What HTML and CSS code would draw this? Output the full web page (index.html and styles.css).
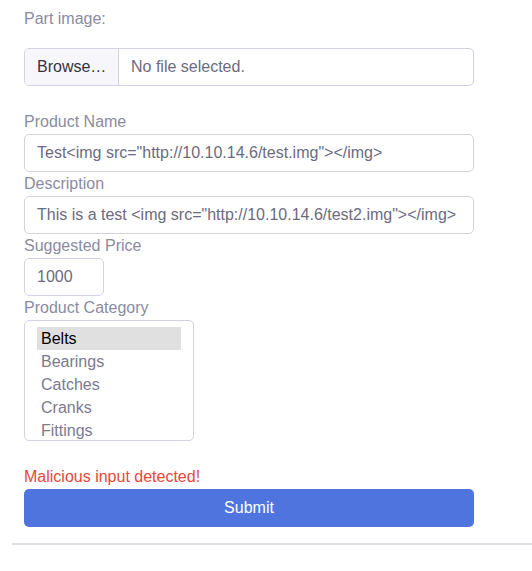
FILE: index.html
```html
<!DOCTYPE html>
<html>
<head>
<meta charset="utf-8">
<link rel="stylesheet" href="styles.css">
</head>
<body>
<div class="page">
  <form class="form">
    <label class="label label-first">Part image:</label>
    <div class="file">
      <span class="file-btn">Browse…</span>
      <span class="file-name">No file selected.</span>
    </div>
    <label class="label label-gap">Product Name</label>
    <div class="input">Test&lt;img src="http://10.10.14.6/test.img"&gt;&lt;/img&gt;</div>
    <label class="label">Description</label>
    <div class="input">This is a test &lt;img src="http://10.10.14.6/test2.img"&gt;&lt;/img&gt;</div>
    <label class="label">Suggested Price</label>
    <div class="input input-price">1000</div>
    <label class="label">Product Category</label>
    <div class="listbox" role="listbox">
      <div class="option option-selected">Belts</div>
      <div class="option">Bearings</div>
      <div class="option">Catches</div>
      <div class="option">Cranks</div>
      <div class="option">Fittings</div>
    </div>
    <p class="error">Malicious input detected!</p>
    <div class="submit">Submit</div>
  </form>
  <div class="rule"></div>
</div>
</body>
</html>
```
FILE: styles.css
```css
* { box-sizing: border-box; }
html, body { margin: 0; padding: 0; background: #fff; }
body {
  font-family: "Liberation Sans", Arial, sans-serif;
  font-size: 16px;
  color: #6b6b80;
}
.page { padding-left: 12px; }
.form {
  display: flex;
  flex-direction: column;
  align-items: flex-start;
  padding: 7px 12px 0;
  width: 474px;
}
.label {
  display: block;
  line-height: 24px;
  color: #8b8ba0;
}
.label-first { margin-bottom: 17px; }
.label-gap { margin-top: 24px; }
.file {
  display: flex;
  width: 450px;
  height: 38px;
  border: 1px solid #d3d1e3;
  border-radius: 5px;
  overflow: hidden;
  line-height: 36px;
}
.file-btn {
  width: 94px;
  padding-left: 12px;
  background: #f7f7fb;
  border-right: 1px solid #d3d1e3;
  color: #333340;
}
.file-name { padding-left: 12px; color: #6b6b80; }
.input {
  width: 450px;
  height: 38px;
  border: 1px solid #d3d1e3;
  border-radius: 5px;
  padding: 0 12px;
  line-height: 36px;
  white-space: nowrap;
  overflow: hidden;
  color: #6b6b80;
}
.input-price { width: 80px; }
.listbox {
  width: 170px;
  height: 121px;
  border: 1px solid #d3d1e3;
  border-radius: 5px;
  padding: 6px 12px 0;
  overflow: hidden;
}
.option {
  line-height: 23px;
  padding: 0 4px;
  color: #7a7a90;
}
.option-selected { background: #e0e0e0; color: #000; }
.error {
  margin: 26px 0 2px;
  line-height: 20px;
  color: #e8483a;
}
.submit {
  width: 450px;
  height: 38px;
  border-radius: 5px;
  background: #4f74de;
  color: #fff;
  text-align: center;
  line-height: 38px;
}
.rule {
  margin-top: 16px;
  height: 2px;
  background: #dcdce4;
}
```
